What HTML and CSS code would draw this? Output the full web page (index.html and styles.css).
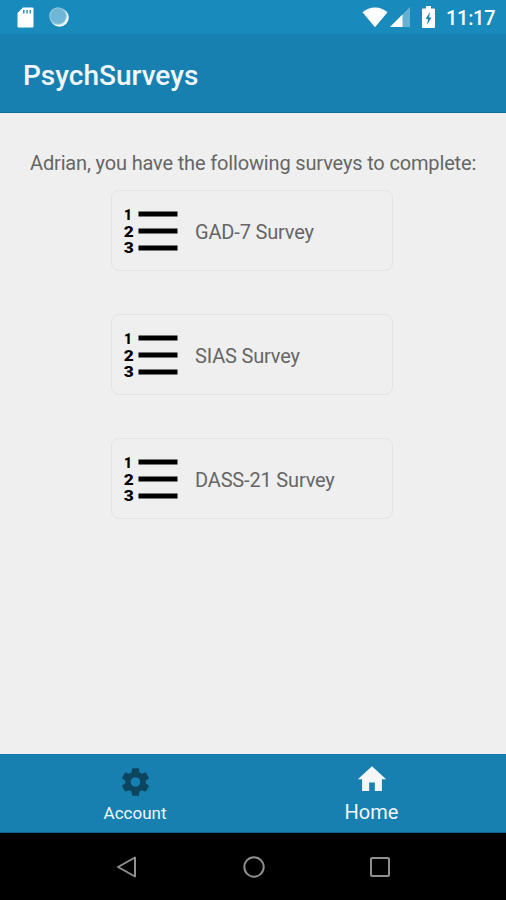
FILE: index.html
```html
<!DOCTYPE html>
<html lang="en">
<head>
<meta charset="utf-8">
<title>PsychSurveys</title>
<link rel="stylesheet" href="styles.css">
</head>
<body>
<div class="status-bar">
  <svg class="sd" width="17" height="21" viewBox="0 0 17 21"><path fill="#fff" d="M6 .5H15.500Q16.500.5 16.500 1.500V19.500Q16.500 20.500 15.500 20.500H1.500Q.5 20.500.5 19.500V6Z"/><path stroke="#2f93c0" stroke-width="1.500" d="M6.800 3V6.500M10 3V6.500M13.300 3V6.500"/></svg>
  <svg class="sync" width="20" height="20" viewBox="0 0 20 20"><circle cx="10.500" cy="10.500" r="9.300" fill="#f2fafd"/><circle cx="9" cy="9" r="8.800" fill="#8fc6de"/><circle cx="9" cy="9" r="7.600" fill="#70b6d5"/></svg>
  <svg class="wifi" width="26" height="21" viewBox="0 0 26 21"><path fill="#fff" d="M.5 5.200Q6 .5 13 .5T25.500 5.200L13 20.300Z"/></svg>
  <svg class="signal" width="20" height="20" viewBox="0 0 20 20"><path fill="#67b1d3" d="M20 0V20H0Z"/><path fill="#fff" d="M12.500 7.500V20H0Z"/></svg>
  <svg class="battery" width="13" height="22" viewBox="0 0 13 22"><path fill="#fff" d="M4 0H9V2.500H12Q13 2.500 13 3.500V21Q13 22 12 22H1Q0 22 0 21V3.500Q0 2.500 1 2.500H4Z"/><path fill="#1b83b3" d="M8 6L3.500 13H6L5 19L9.500 11.500H7Z"/></svg>
  <span class="clock">11:17</span>
</div>
<header class="app-bar"><h1>PsychSurveys</h1></header>
<main>
  <p class="intro">Adrian, you have the following surveys to complete:</p>
  <div class="surveys">
    <div class="card">
      <svg class="list-icon" width="56" height="50" viewBox="0 0 56 50"><g class="digits"><text x="1" y="13.800" textLength="8" lengthAdjust="spacingAndGlyphs">1</text><text x=".7" y="30.600" textLength="10" lengthAdjust="spacingAndGlyphs">2</text><text x=".7" y="47.400" textLength="10" lengthAdjust="spacingAndGlyphs">3</text></g><path class="lines" d="M15.500 8H54.500M15.500 25H54.500M15.500 42H54.500"/></svg>
      <span class="label">GAD-7 Survey</span>
    </div>
    <div class="card">
      <svg class="list-icon" width="56" height="50" viewBox="0 0 56 50"><g class="digits"><text x="1" y="13.800" textLength="8" lengthAdjust="spacingAndGlyphs">1</text><text x=".7" y="30.600" textLength="10" lengthAdjust="spacingAndGlyphs">2</text><text x=".7" y="47.400" textLength="10" lengthAdjust="spacingAndGlyphs">3</text></g><path class="lines" d="M15.500 8H54.500M15.500 25H54.500M15.500 42H54.500"/></svg>
      <span class="label">SIAS Survey</span>
    </div>
    <div class="card">
      <svg class="list-icon" width="56" height="50" viewBox="0 0 56 50"><g class="digits"><text x="1" y="13.800" textLength="8" lengthAdjust="spacingAndGlyphs">1</text><text x=".7" y="30.600" textLength="10" lengthAdjust="spacingAndGlyphs">2</text><text x=".7" y="47.400" textLength="10" lengthAdjust="spacingAndGlyphs">3</text></g><path class="lines" d="M15.500 8H54.500M15.500 25H54.500M15.500 42H54.500"/></svg>
      <span class="label">DASS-21 Survey</span>
    </div>
  </div>
</main>
<nav class="tabs">
  <div class="tab account">
    <svg width="33" height="34" viewBox="0 0 24 24"><path fill="#0b4560" d="M19.430 12.980c.04-.32.07-.64.07-.98s-.03-.66-.07-.98l2.110-1.650c.19-.15.24-.42.12-.64l-2-3.460c-.12-.22-.39-.3-.61-.22l-2.490 1c-.52-.4-1.080-.73-1.690-.98l-.38-2.650C14.460 2.180 14.250 2 14 2h-4c-.25 0-.46.18-.49.42l-.38 2.650c-.61.25-1.170.59-1.690.98l-2.490-1c-.23-.09-.49 0-.61.22l-2 3.460c-.13.22-.07.49.12.64l2.110 1.650c-.04.32-.07.65-.07.98s.03.66.07.98l-2.110 1.650c-.19.15-.24.42-.12.64l2 3.460c.12.22.39.3.61.22l2.490-1c.52.4 1.080.73 1.690.98l.38 2.650c.03.24.24.42.49.42h4c.25 0 .46-.18.49-.42l.38-2.650c.61-.25 1.170-.59 1.690-.98l2.490 1c.23.09.49 0 .61-.22l2-3.460c.12-.22.07-.49-.12-.64zM12 15.500a3.500 3.500 0 1 1 0-7 3.500 3.500 0 0 1 0 7z"/></svg>
    <span>Account</span>
  </div>
  <div class="tab home">
    <svg width="34" height="34" viewBox="0 0 24 24"><path fill="#f4f6f8" d="M10 20.500v-6h4v6h5v-8.300h3L12 3 2 12.200h3v8.300z"/></svg>
    <span>Home</span>
  </div>
</nav>
<footer class="system-nav">
  <svg width="24" height="24" viewBox="0 0 24 24"><path d="M20 2.500V21.500L3 12Z"/></svg>
  <svg width="24" height="24" viewBox="0 0 24 24"><circle cx="12" cy="12" r="9.700"/></svg>
  <svg width="24" height="24" viewBox="0 0 24 24"><rect x="3" y="3" width="18" height="18" rx="1"/></svg>
</footer>
</body>
</html>
```

FILE: styles.css
```css
* { box-sizing: border-box; }
body {
  margin: 0;
  width: 506px;
  height: 900px;
  display: flex;
  flex-direction: column;
  overflow: hidden;
  background: #efefef;
  font-family: Roboto, sans-serif;
  color: #666;
}
svg { display: block; flex: none; }
.status-bar {
  height: 34px;
  flex: none;
  display: flex;
  align-items: center;
  padding: 0 10px 0 17px;
  background: #198abc;
  color: #fff;
}
.sync { margin-left: 15px; }
.wifi { margin-left: auto; }
.signal { margin-left: 2px; }
.battery { margin-left: 12px; }
.clock {
  width: 50px;
  margin-left: 11px;
  padding-top: 2px;
  font-size: 20px;
  font-weight: 500;
  letter-spacing: -0.3px;
  white-space: nowrap;
}
.app-bar {
  height: 79px;
  flex: none;
  display: flex;
  align-items: center;
  padding: 4px 23px 0;
  background: #1780b0;
  border-bottom: 1px solid #0c6a98;
}
h1 {
  margin: 0;
  color: #f1f6fa;
  font-size: 28px;
  font-weight: 500;
}
main {
  flex: 1;
  padding-top: 38px;
}
.intro {
  margin: 0 0 0 30px;
  height: 39px;
  line-height: 24px;
  font-size: 20px;
  letter-spacing: -0.155px;
  white-space: nowrap;
}
.surveys {
  display: flex;
  flex-direction: column;
  align-items: center;
  gap: 43px;
  padding-right: 2px;
}
.card {
  width: 282px;
  height: 81px;
  display: flex;
  align-items: center;
  padding-left: 11px;
  border: 1px solid #e3e3e3;
  border-radius: 8px;
}
.label {
  margin-left: 16px;
  padding-top: 2px;
  font-size: 20px;
  letter-spacing: -0.17px;
  white-space: nowrap;
}
.digits {
  font: 900 15.5px Roboto, sans-serif;
  fill: #000;
}
.lines { stroke: #000; stroke-width: 5; }
.tabs {
  height: 79px;
  flex: none;
  display: grid;
  grid-template-columns: 236px 237px;
  padding-left: 17px;
  background: #1780b0;
  border-top: 1px solid #0f78a8;
  border-bottom: 1px solid #0c6389;
}
.tab {
  display: flex;
  flex-direction: column;
  align-items: center;
  color: #f1f7fb;
}
.account { padding-top: 10px; font-size: 17px; }
.home { padding-top: 7px; font-size: 20px; }
.account span { line-height: 24px; margin-top: 2px; }
.home span { line-height: 24px; margin-top: 4px; }
.system-nav {
  height: 67px;
  flex: none;
  display: flex;
  justify-content: center;
  align-items: center;
  gap: 102.500px;
  padding-left: 1px;
  background: #000;
}
.system-nav svg { fill: none; stroke: #8f8f8f; stroke-width: 2; stroke-linejoin: round; }
```
